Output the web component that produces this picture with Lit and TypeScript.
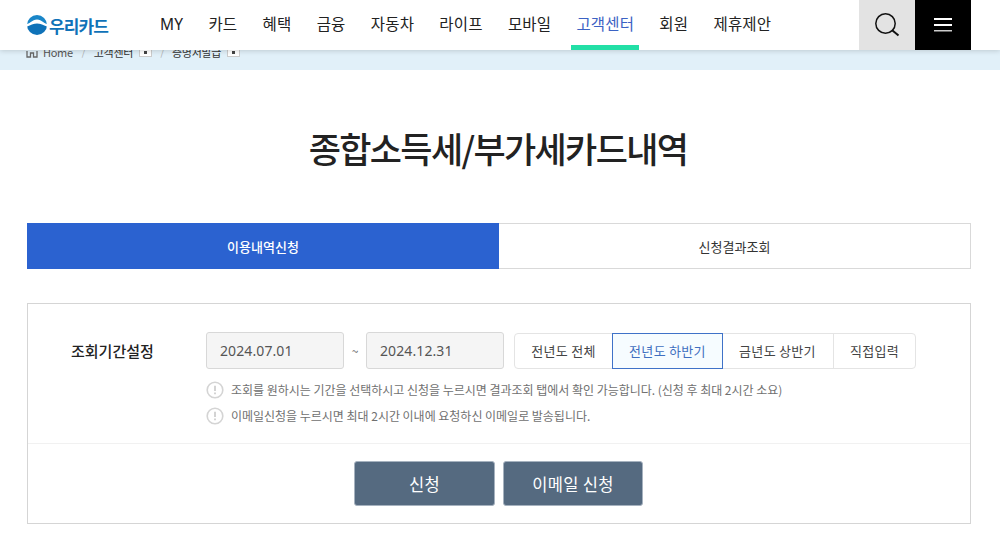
import { LitElement, html, css, svg } from "lit";
import { customElement } from "lit/decorators.js";

const info = svg`<svg class="info" width="18" height="18" viewBox="0 0 18 18"><circle cx="9" cy="9" r="7.800" fill="#fff" stroke="#d4d4d4" stroke-width="1.600"/><path d="M9 4.800v5.200" stroke="#c4c4c4" stroke-width="1.500"/><path d="M9 11.600v1.700" stroke="#c4c4c4" stroke-width="1.500"/></svg>`;

@customElement("app-root")
export class AppRoot extends LitElement {
  static styles = css`
    :host { display: block; height: 559px; overflow: hidden; background: #fff; color: #222;
      font-family: "Noto Sans CJK KR", "Noto Sans", sans-serif; }
    * { box-sizing: border-box; }
    header { position: relative; z-index: 2; height: 50px; display: flex; background: #fff;
      box-shadow: 0 1px 5px rgba(0,0,0,.16); }
    .logo { width: 155px; padding-left: 27px; display: flex; align-items: center; gap: 2px; flex: none; }
    .logo span { font-size: 17px; font-weight: 700; color: #0f72b8; letter-spacing: -.9px; line-height: 1; }
    nav { display: flex; flex: 1; }
    nav a { height: 50px; line-height: 50px; font-family: "Noto Sans", "Noto Sans CJK KR", sans-serif; font-size: 15.500px; color: #222; letter-spacing: .15px; padding: 0 5px; margin-right: 15.300px; position: relative; white-space: nowrap; margin-top: -1px; }
    nav a.on { color: #3b62c4; }
    nav a.on::after { content: ""; position: absolute; left: 0; right: 0; bottom: -1px; height: 5px; background: #22dfa6; }
    .sbtn, .mbtn { width: 56px; height: 50px; display: flex; align-items: center; justify-content: center; flex: none; }
    .sbtn { background: #e3e3e3; }
    .mbtn { background: #000; margin-right: 29px; }
    .crumbs-band { height: 20px; background: #e1f0f9; position: relative; z-index: 1; }
    .crumbs { display: flex; align-items: center; padding-left: 26px; height: 16px; font-size: 11px; color: #555; letter-spacing: -.3px; transform: translateY(-6px); }
    .crumbs svg { flex: none; margin-right: 5px; }
    .sep { color: #aaa; font-size: 9px; width: 21px; text-align: center; }
    .sep.b { width: 20px; }
    .drop { width: 13px; height: 10px; background: #fff; border: 1px solid #ccc; margin-left: 6px; display: flex; align-items: center; justify-content: center; }
    .drop::after { content: ""; width: 3px; height: 3px; background: #444; }
    .dark { color: #333; }
    h1 { margin: 0; padding: 51px 4px 0 0; height: 153px; text-align: center; font-size: 35px; line-height: 54px; font-weight: 500; letter-spacing: -1.650px; color: #222; }
    .tabs { margin: 0 29px 0 27px; height: 46px; display: grid; grid-template-columns: 471px 1fr; border: 1px solid #d9d9d9; font-size: 13px; }
    .tabs div { display: flex; align-items: center; justify-content: center; color: #333; }
    .tabs .act { background: #2b62d0; color: #fff; font-weight: 500; margin: -1px 0 -1px -1px; }
    .card { margin: 34px 29px 0 27px; height: 221px; border: 1px solid #d5d5d5; display: flex; flex-direction: column; }
    .top { height: 140px; border-bottom: 1px solid #f1f1f1; padding: 28px 0 0 43px; display: grid; grid-template-columns: 135px 1fr; flex: none; }
    .label { font-size: 15px; font-weight: 500; line-height: 38px; color: #222; }
    .row { display: flex; align-items: center; height: 37px; }
    .date { width: 138px; height: 37px; background: #f5f5f5; border: 1px solid #d8d8d8; border-radius: 3px; padding-left: 13px; display: flex; align-items: center; font-size: 14px; color: #555; font-family: "Noto Sans", sans-serif; letter-spacing: .1px; }
    .tilde { width: 22px; text-align: center; font-size: 12px; color: #666; }
    .seg { margin-left: 10px; display: flex; height: 36px; border: 1px solid #e4e4e4; border-radius: 4px; font-size: 13px; color: #444; letter-spacing: .3px; }
    .seg div { display: flex; align-items: center; justify-content: center; border-left: 1px solid #e4e4e4; white-space: nowrap; }
    .seg div:first-child { border-left: 0; }
    .seg .sel { background: #f6fcff; border: 1px solid #3f72c8; color: #3f6fc0; margin: -1px -1px -1px 0; height: 36px; }
    .w97 { width: 97px; }
    .w111 { width: 111px; }
    .w82 { width: 82px; }
    .seg .nob { border-left: 0; }
    .notes { margin-top: 10px; display: flex; flex-direction: column; gap: 6px; }
    .note { display: flex; align-items: center; gap: 7px; height: 19px; font-size: 12px; color: #707070; letter-spacing: -.02px; white-space: nowrap; margin-top: 1px; }
    .info { flex: none; }
    .bottom { display: flex; justify-content: center; gap: 8px; padding-top: 17px; }
    .btn { width: 140px; height: 45px; border-radius: 3px; background: #556a80; color: #fff; border: 1px solid #a6b2bf; display: flex; align-items: center; justify-content: center; font-size: 16.500px; letter-spacing: .3px; }
    .btn.first { width: 141px; margin-left: -1px; }
  `;

  render() {
    return html`
      <header>
        <div class="logo">
          <svg width="20" height="20" viewBox="0 0 20 20">
            <defs><clipPath id="c"><circle cx="10" cy="10" r="10"/></clipPath></defs>
            <g clip-path="url(#c)">
              <rect width="20" height="20" fill="#fff"/>
              <path d="M0 9C3 9 5 4.500 10 4.500S17 9 20 9V0H0Z" fill="#1a86c8"/>
              <path d="M0 11.500C4 10 6 8.500 10 8.500s6 1.500 10 3V20H0Z" fill="#0f72b8"/>
              <path d="M0 9.500C4 8 6 6 10 6s6 2 10 3.500v1C16 9 14 8 10 8S4 9 0 10.500Z" fill="#fff"/>
            </g>
          </svg>
          <span>우리카드</span>
        </div>
        <nav>
          ${["MY", "카드", "혜택", "금융", "자동차", "라이프", "모바일", "고객센터", "회원", "제휴제안"].map(
            (n) => html`<a class=${n === "고객센터" ? "on" : ""}>${n}</a>`
          )}
        </nav>
        <div class="sbtn">
          <svg width="26" height="26" viewBox="0 0 26 26" fill="none" stroke="#111" stroke-width="1.500">
            <circle cx="11.500" cy="11.500" r="9.700"/><path d="M18.500 18.500l6 5" stroke-width="2"/>
          </svg>
        </div>
        <div class="mbtn">
          <svg width="18" height="14" viewBox="0 0 18 14" fill="#fff"><rect y="0" width="18" height="2"/><rect y="6" width="18" height="2"/><rect y="12" width="18" height="1.500" fill="#ccc"/></svg>
        </div>
      </header>
      <div class="crumbs-band">
        <div class="crumbs">
          <svg width="12" height="12" viewBox="0 0 12 12" fill="none" stroke="#666" stroke-width="1.300"><path d="M1 5v6h3.500V7h3v4H11V5"/></svg>
          <span>Home</span><span class="sep">/</span>
          <span class="dark">고객센터</span><span class="drop"></span><span class="sep b">/</span>
          <span class="dark">증명서발급</span><span class="drop"></span>
        </div>
      </div>
      <h1>종합소득세/부가세카드내역</h1>
      <div class="tabs"><div class="act">이용내역신청</div><div>신청결과조회</div></div>
      <div class="card">
        <div class="top">
          <div class="label">조회기간설정</div>
          <div>
            <div class="row">
              <div class="date">2024.07.01</div>
              <div class="tilde">~</div>
              <div class="date">2024.12.31</div>
              <div class="seg">
                <div class="w97">전년도 전체</div>
                <div class="sel w111">전년도 하반기</div>
                <div class="w111 nob">금년도 상반기</div>
                <div class="w82">직접입력</div>
              </div>
            </div>
            <div class="notes">
              <div class="note">${info}<span>조회를 원하시는 기간을 선택하시고 신청을 누르시면 결과조회 탭에서 확인 가능합니다. (신청 후 최대 2시간 소요)</span></div>
              <div class="note">${info}<span>이메일신청을 누르시면 최대 2시간 이내에 요청하신 이메일로 발송됩니다.</span></div>
            </div>
          </div>
        </div>
        <div class="bottom"><div class="btn first">신청</div><div class="btn">이메일 신청</div></div>
      </div>
    `;
  }
}
